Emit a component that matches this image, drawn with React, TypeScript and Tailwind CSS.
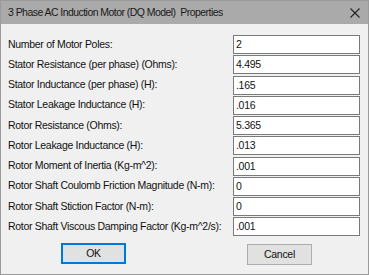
import React from "react";

const rows: [string, string][] = [
  ["Number of Motor Poles:", "2"],
  ["Stator Resistance (per phase) (Ohms):", "4.495"],
  ["Stator Inductance (per phase) (H):", ".165"],
  ["Stator Leakage Inductance (H):", ".016"],
  ["Rotor Resistance (Ohms):", "5.365"],
  ["Rotor Leakage Inductance (H):", ".013"],
  ["Rotor Moment of Inertia (Kg-m^2):", ".001"],
  ["Rotor Shaft Coulomb Friction Magnitude (N-m):", "0"],
  ["Rotor Shaft Stiction Factor (N-m):", "0"],
  ["Rotor Shaft Viscous Damping Factor (Kg-m^2/s):", ".001"],
];

export default function App() {
  return (
    <div
      className="w-[369px] h-[275px] bg-[#f0f0f0] border border-[#9a9a9a] flex flex-col text-[#111] overflow-hidden"
      style={{ fontFamily: '"Liberation Sans", Arial, sans-serif' }}
    >
      <div className="h-[23px] bg-[#aaaaaa] flex items-center justify-between pl-[7px] pr-[6px]">
        <span className="text-[10.5px] tracking-[-0.55px] text-[#1a1a1a]">
          3 Phase AC Induction Motor (DQ Model)&nbsp; Properties
        </span>
        <svg width="12" height="12" viewBox="0 0 12 12" className="mr-[1px]">
          <path d="M1.5 1.5 L10.5 10.5 M10.5 1.5 L1.5 10.5" stroke="#222" strokeWidth="1.1" />
        </svg>
      </div>
      <div className="flex flex-col pt-[11px] pl-[7px] pr-[8px] gap-y-[1.25px]">
        {rows.map(([label, value]) => (
          <div key={label} className="flex items-center h-[19px]">
            <span className="flex-1 text-[10.5px] tracking-[-0.3px] whitespace-nowrap">{label}</span>
            <div className="w-[127px] h-[19px] bg-white border border-[#7a7a7a] flex items-center pl-[2px] pt-[1px] text-[10.5px] tracking-[-0.3px]">
              {value}
            </div>
          </div>
        ))}
      </div>
      <div className="flex pt-[7px]">
        <button className="ml-[60px] w-[65px] h-[21px] bg-[#e1e1e1] border-2 border-[#0078d7] text-[10.5px] tracking-[-0.3px]">
          OK
        </button>
        <button className="ml-[121px] mt-[1px] w-[65px] h-[21px] bg-[#e1e1e1] border border-[#adadad] text-[10.5px] tracking-[-0.3px]">
          Cancel
        </button>
      </div>
    </div>
  );
}
